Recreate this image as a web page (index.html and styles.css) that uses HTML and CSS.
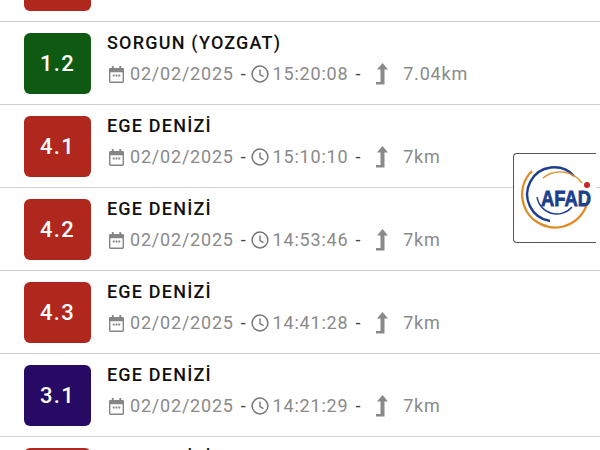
FILE: index.html
```html
<!DOCTYPE html>
<html lang="en">
<head>
    <meta charset="UTF-8">
    <meta name="viewport" content="width=device-width, initial-scale=1.0">
    <title>Son Depremler</title>
    <link rel="stylesheet" href="styles.css">
</head>
<body>
    <svg class="icon-defs" width="0" height="0">
        <symbol id="ic-cal" viewBox="0 0 16 18">
            <path fill="#858585" d="M3 0h2v2h6V0h2v2h1.500A1.500 1.500 0 0 1 16 3.500v13a1.500 1.500 0 0 1-1.500 1.500h-13A1.500 1.500 0 0 1 0 16.500v-13A1.500 1.500 0 0 1 1.500 2H3zM1.500 6.500v10h13v-10z"/>
            <path fill="#858585" d="M4 9h2v2H4zM7 9h2v2H7zM10 9h2v2h-2z"/>
        </symbol>
        <symbol id="ic-clock" viewBox="0 0 18 18">
            <circle cx="9" cy="9" r="7.900" fill="none" stroke="#777" stroke-width="1.500"/>
            <path d="M9 4.500V9.500l3.500 2.200" fill="none" stroke="#777" stroke-width="1.400"/>
        </symbol>
        <symbol id="ic-depth" viewBox="0 0 14 22">
            <path fill="#8a8a8a" d="M7.500 0L13 6.500H9.500V21.500H1V19H5.500V6.500H2z"/>
        </symbol>
    </svg>

    <ul class="list">
        <li class="row"><div class="mag red">4.0</div><div class="info"><div class="place">EGE DENİZİ</div></div></li>

        <li class="row">
            <div class="mag green">1.2</div>
            <div class="info">
                <div class="place">SORGUN (YOZGAT)</div>
                <div class="meta">
                    <svg class="ic-cal"><use href="#ic-cal"/></svg><span class="date">02/02/2025</span><span class="dash">-</span>
                    <svg class="ic-clock"><use href="#ic-clock"/></svg><span class="time">15:20:08</span><span class="dash">-</span>
                    <svg class="ic-depth"><use href="#ic-depth"/></svg><span class="depth">7.04km</span>
                </div>
            </div>
        </li>

        <li class="row">
            <div class="mag red">4.1</div>
            <div class="info">
                <div class="place">EGE DENİZİ</div>
                <div class="meta">
                    <svg class="ic-cal"><use href="#ic-cal"/></svg><span class="date">02/02/2025</span><span class="dash">-</span>
                    <svg class="ic-clock"><use href="#ic-clock"/></svg><span class="time">15:10:10</span><span class="dash">-</span>
                    <svg class="ic-depth"><use href="#ic-depth"/></svg><span class="depth">7km</span>
                </div>
            </div>
        </li>

        <li class="row">
            <div class="mag red">4.2</div>
            <div class="info">
                <div class="place">EGE DENİZİ</div>
                <div class="meta">
                    <svg class="ic-cal"><use href="#ic-cal"/></svg><span class="date">02/02/2025</span><span class="dash">-</span>
                    <svg class="ic-clock"><use href="#ic-clock"/></svg><span class="time">14:53:46</span><span class="dash">-</span>
                    <svg class="ic-depth"><use href="#ic-depth"/></svg><span class="depth">7km</span>
                </div>
            </div>
        </li>

        <li class="row">
            <div class="mag red">4.3</div>
            <div class="info">
                <div class="place">EGE DENİZİ</div>
                <div class="meta">
                    <svg class="ic-cal"><use href="#ic-cal"/></svg><span class="date">02/02/2025</span><span class="dash">-</span>
                    <svg class="ic-clock"><use href="#ic-clock"/></svg><span class="time">14:41:28</span><span class="dash">-</span>
                    <svg class="ic-depth"><use href="#ic-depth"/></svg><span class="depth">7km</span>
                </div>
            </div>
        </li>

        <li class="row">
            <div class="mag purple">3.1</div>
            <div class="info">
                <div class="place">EGE DENİZİ</div>
                <div class="meta">
                    <svg class="ic-cal"><use href="#ic-cal"/></svg><span class="date">02/02/2025</span><span class="dash">-</span>
                    <svg class="ic-clock"><use href="#ic-clock"/></svg><span class="time">14:21:29</span><span class="dash">-</span>
                    <svg class="ic-depth"><use href="#ic-depth"/></svg><span class="depth">7km</span>
                </div>
            </div>
        </li>

        <li class="row"><div class="mag red">4.0</div><div class="info"><div class="place">EGE DENİZİ</div></div></li>
    </ul>

    <!-- floating logo button -->
    <div class="logo-btn">
        <svg viewBox="0 0 82 88" width="82" height="88">
            <path d="M18 17 A33 33 0 1 0 74 44" fill="none" stroke="#e08a24" stroke-width="2.400"/>
            <path d="M60 22 A27 27 0 1 0 36 67" fill="none" stroke="#1d3f8f" stroke-width="2.400"/>
            <path d="M29 24 A27 27 0 0 1 68 29" fill="none" stroke="#e08a24" stroke-width="1.400"/>
            <path d="M23 43 A20 20 0 0 0 58 53" fill="none" stroke="#1d3f8f" stroke-width="1.400"/>
            <text x="27" y="52" textLength="50" lengthAdjust="spacingAndGlyphs" class="logo-text">AFAD</text>
            <circle cx="73" cy="31" r="3" fill="#c8242b"/>
        </svg>
    </div>
</body>
</html>
```

FILE: styles.css
```css
body {
    margin: 0;
    height: 450px;
    overflow: hidden;
    background: #fff;
    font-family: Roboto, sans-serif;
}

.icon-defs {
    display: block;
    height: 0;
}

.list {
    list-style: none;
    margin: -61px 0 0;
    padding: 0;
}

.row {
    display: flex;
    align-items: flex-start;
    height: 83px;
    box-sizing: border-box;
    padding: 11px 0 0 24px;
    border-bottom: 1px solid #cfcfcf;
}

.mag {
    flex: none;
    display: flex;
    align-items: center;
    justify-content: center;
    width: 67px;
    height: 61px;
    border-radius: 6px;
    color: #fff;
    font-size: 22px;
    font-weight: 500;
    letter-spacing: 1.3px;
}

.red {
    background: #b0271d;
}

.green {
    background: #0f5a12;
}

.purple {
    background: #260a63;
}

.info {
    margin-left: 16px;
}

.place {
    font-size: 18px;
    font-weight: 500;
    line-height: 20px;
    letter-spacing: 1.2px;
    color: #111;
}

.meta {
    display: flex;
    align-items: center;
    margin-top: 9px;
    font-size: 18px;
    line-height: 24px;
    letter-spacing: 0.8px;
    color: #8a8a8a;
}

.ic-cal {
    width: 15px;
    height: 17px;
    margin: 0 6px 0 2px;
}

.dash {
    color: #444;
    margin-left: 7px;
}

.ic-clock {
    width: 18px;
    height: 18px;
    margin: 0 4px 0 4px;
}

.ic-depth {
    width: 14px;
    height: 22px;
    margin: 0 14px 0 14px;
}

.logo-btn {
    position: absolute;
    left: 513px;
    top: 153px;
    width: 82px;
    height: 88px;
    background: #fff;
    border: 1px solid #555;
    border-right: 0;
    border-radius: 4px 0 0 4px;
}

.logo-btn svg {
    display: block;
}

.logo-text {
    font-family: "Liberation Sans", sans-serif;
    font-size: 22px;
    font-weight: 700;
    fill: #1d3f8f;
    stroke: #1d3f8f;
    stroke-width: 0.8px;
}
```
